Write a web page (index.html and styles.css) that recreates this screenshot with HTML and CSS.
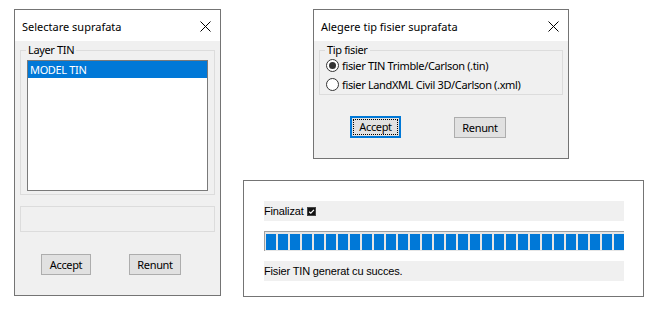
FILE: index.html
```html
<!DOCTYPE html>
<html lang="ro">
<head>
  <meta charset="UTF-8" />
  <title>Suprafata TIN</title>
  <link rel="stylesheet" href="styles.css">
</head>
<body>

  <div class="win win-select">
    <div class="titlebar">
      <span class="title">Selectare suprafata</span>
      <svg class="close" width="11" height="11" viewBox="0 0 11 11"><path d="M0.5 0.5 L10.5 10.5 M10.5 0.5 L0.5 10.5" stroke="#000" stroke-width="1"/></svg>
    </div>
    <div class="client">
      <fieldset class="group group-layer">
        <legend>Layer TIN</legend>
        <div class="listbox">
          <div class="item selected">MODEL TIN</div>
        </div>
      </fieldset>
      <div class="status-box"></div>
      <div class="buttons buttons-select">
        <button class="btn btn-accept">Accept</button>
        <button class="btn btn-cancel">Renunt</button>
      </div>
    </div>
  </div>

  <div class="win win-type">
    <div class="titlebar">
      <span class="title">Alegere tip fisier suprafata</span>
      <svg class="close" width="11" height="11" viewBox="0 0 11 11"><path d="M0.5 0.5 L10.5 10.5 M10.5 0.5 L0.5 10.5" stroke="#000" stroke-width="1"/></svg>
    </div>
    <div class="client">
      <fieldset class="group group-type">
        <legend>Tip fisier</legend>
        <label class="radio"><span class="dot checked"></span>fisier TIN Trimble/Carlson (.tin)</label>
        <label class="radio"><span class="dot"></span>fisier LandXML Civil 3D/Carlson (.xml)</label>
      </fieldset>
      <div class="buttons buttons-type">
        <button class="btn btn-accept focused"><span>Accept</span></button>
        <button class="btn btn-cancel">Renunt</button>
      </div>
    </div>
  </div>

  <div class="win win-progress">
    <div class="row">
      Finalizat
      <svg class="check" width="9" height="9" viewBox="0 0 9 9">
        <rect x="0" y="0" width="9" height="9" fill="#111"/>
        <rect x="0.5" y="0.5" width="8" height="8" fill="none" stroke="#444"/>
        <path d="M2.2 4.7 L3.8 6.2 L6.9 2.8" stroke="#fff" stroke-width="1.2" fill="none"/>
      </svg>
    </div>
    <div class="progress" id="progress"></div>
    <div class="row">Fisier TIN generat cu succes.</div>
  </div>

  <script>
    const bar = document.getElementById("progress");
    for (let i = 0; i < 30; i++) {
      const b = document.createElement("span");
      b.className = "block";
      bar.appendChild(b);
    }
  </script>
</body>
</html>
```

FILE: styles.css
```css
body {
  margin: 0;
  background: #fff;
  font-family: "Noto Sans", sans-serif;
  font-size: 11px;
  letter-spacing: -0.35px;
  color: #000;
  position: relative;
  width: 656px;
  height: 310px;
  overflow: hidden;
}

.win {
  position: absolute;
  border: 1px solid #747474;
  background: #f0f0f0;
  box-sizing: border-box;
}

.win-select {
  left: 14px;
  top: 9px;
  width: 207px;
  height: 287px;
}

.win-type {
  left: 313px;
  top: 9px;
  width: 256px;
  height: 150px;
}

.win-progress {
  left: 243px;
  top: 180px;
  width: 401px;
  height: 117px;
  background: #fff;
  padding: 20px 0 0 20px;
  font-family: "Liberation Sans", Arial, sans-serif;
  font-size: 11px;
  letter-spacing: -0.15px;
}

.titlebar {
  background: #fff;
  height: 31px;
  display: flex;
  align-items: center;
  justify-content: space-between;
  padding: 1px 9px 0 7px;
  box-sizing: border-box;
}

.title {
  font-size: 11px;
  letter-spacing: 0;
}

.close {
  display: block;
}

.client {
  padding: 3px 5px 0 5px;
}

.group {
  margin: 0;
  border: 1px solid #dcdcdc;
  padding: 0 6px;
  min-width: 0;
}

.group legend {
  padding: 0 2px;
  margin-left: -1px;
  line-height: 12px;
}

.group-layer {
  padding-bottom: 3px;
}

.listbox {
  background: #fff;
  border: 1px solid #7a7a7a;
  height: 131px;
  box-sizing: border-box;
  margin-top: 4px;
}

.item {
  height: 17px;
  line-height: 17px;
  padding-left: 2px;
}

.item.selected {
  background: #0078d7;
  color: #fff;
}

.status-box {
  margin-top: 11px;
  height: 26px;
  border: 1px solid #dcdcdc;
  box-sizing: border-box;
}

.buttons {
  display: flex;
  align-items: flex-start;
}

.buttons-select {
  margin-top: 22px;
  padding-left: 21px;
  gap: 38px;
}

.btn {
  font-family: inherit;
  font-size: 11px;
  letter-spacing: inherit;
  background: #e1e1e1;
  border: 1px solid #adadad;
  height: 21px;
  padding: 0;
  margin: 0;
  color: #000;
}

.buttons-select .btn-accept { width: 50px; }
.buttons-select .btn-cancel { width: 52px; }

.radio {
  display: flex;
  align-items: center;
  height: 19px;
}

.dot {
  width: 13px;
  height: 13px;
  border: 1px solid #333;
  border-radius: 50%;
  box-sizing: border-box;
  background: #fff;
  margin-right: 3px;
  position: relative;
}

.dot.checked::after {
  content: "";
  position: absolute;
  left: 2px;
  top: 2px;
  width: 7px;
  height: 7px;
  border-radius: 50%;
  background: #333;
}

.buttons-type {
  margin-top: 21px;
  padding-left: 31px;
  gap: 53px;
}

.buttons-type .btn-accept { width: 51px; height: 22px; }
.buttons-type .btn-cancel { width: 52px; height: 21px; margin-top: 1px; }

.btn.focused {
  border: 2px solid #0078d7;
  padding: 1px;
}

.btn.focused span {
  display: block;
  height: 100%;
  border: 1px dotted #000;
  box-sizing: border-box;
  line-height: 14px;
}

.row {
  width: 360px;
  height: 20px;
  background: #f0f0f0;
  display: flex;
  align-items: center;
  gap: 3px;
}

.check {
  display: block;
}

.progress {
  width: 360px;
  height: 20px;
  margin: 10px 0;
  box-sizing: border-box;
  border-top: 1px solid #a0a0a0;
  border-left: 1px solid #a0a0a0;
  background: #e6e6e6;
  padding: 2px 0 1px 1px;
  display: flex;
  gap: 2px;
  overflow: hidden;
}

.block {
  flex: 0 0 10px;
  background: #0078d7;
}
```
